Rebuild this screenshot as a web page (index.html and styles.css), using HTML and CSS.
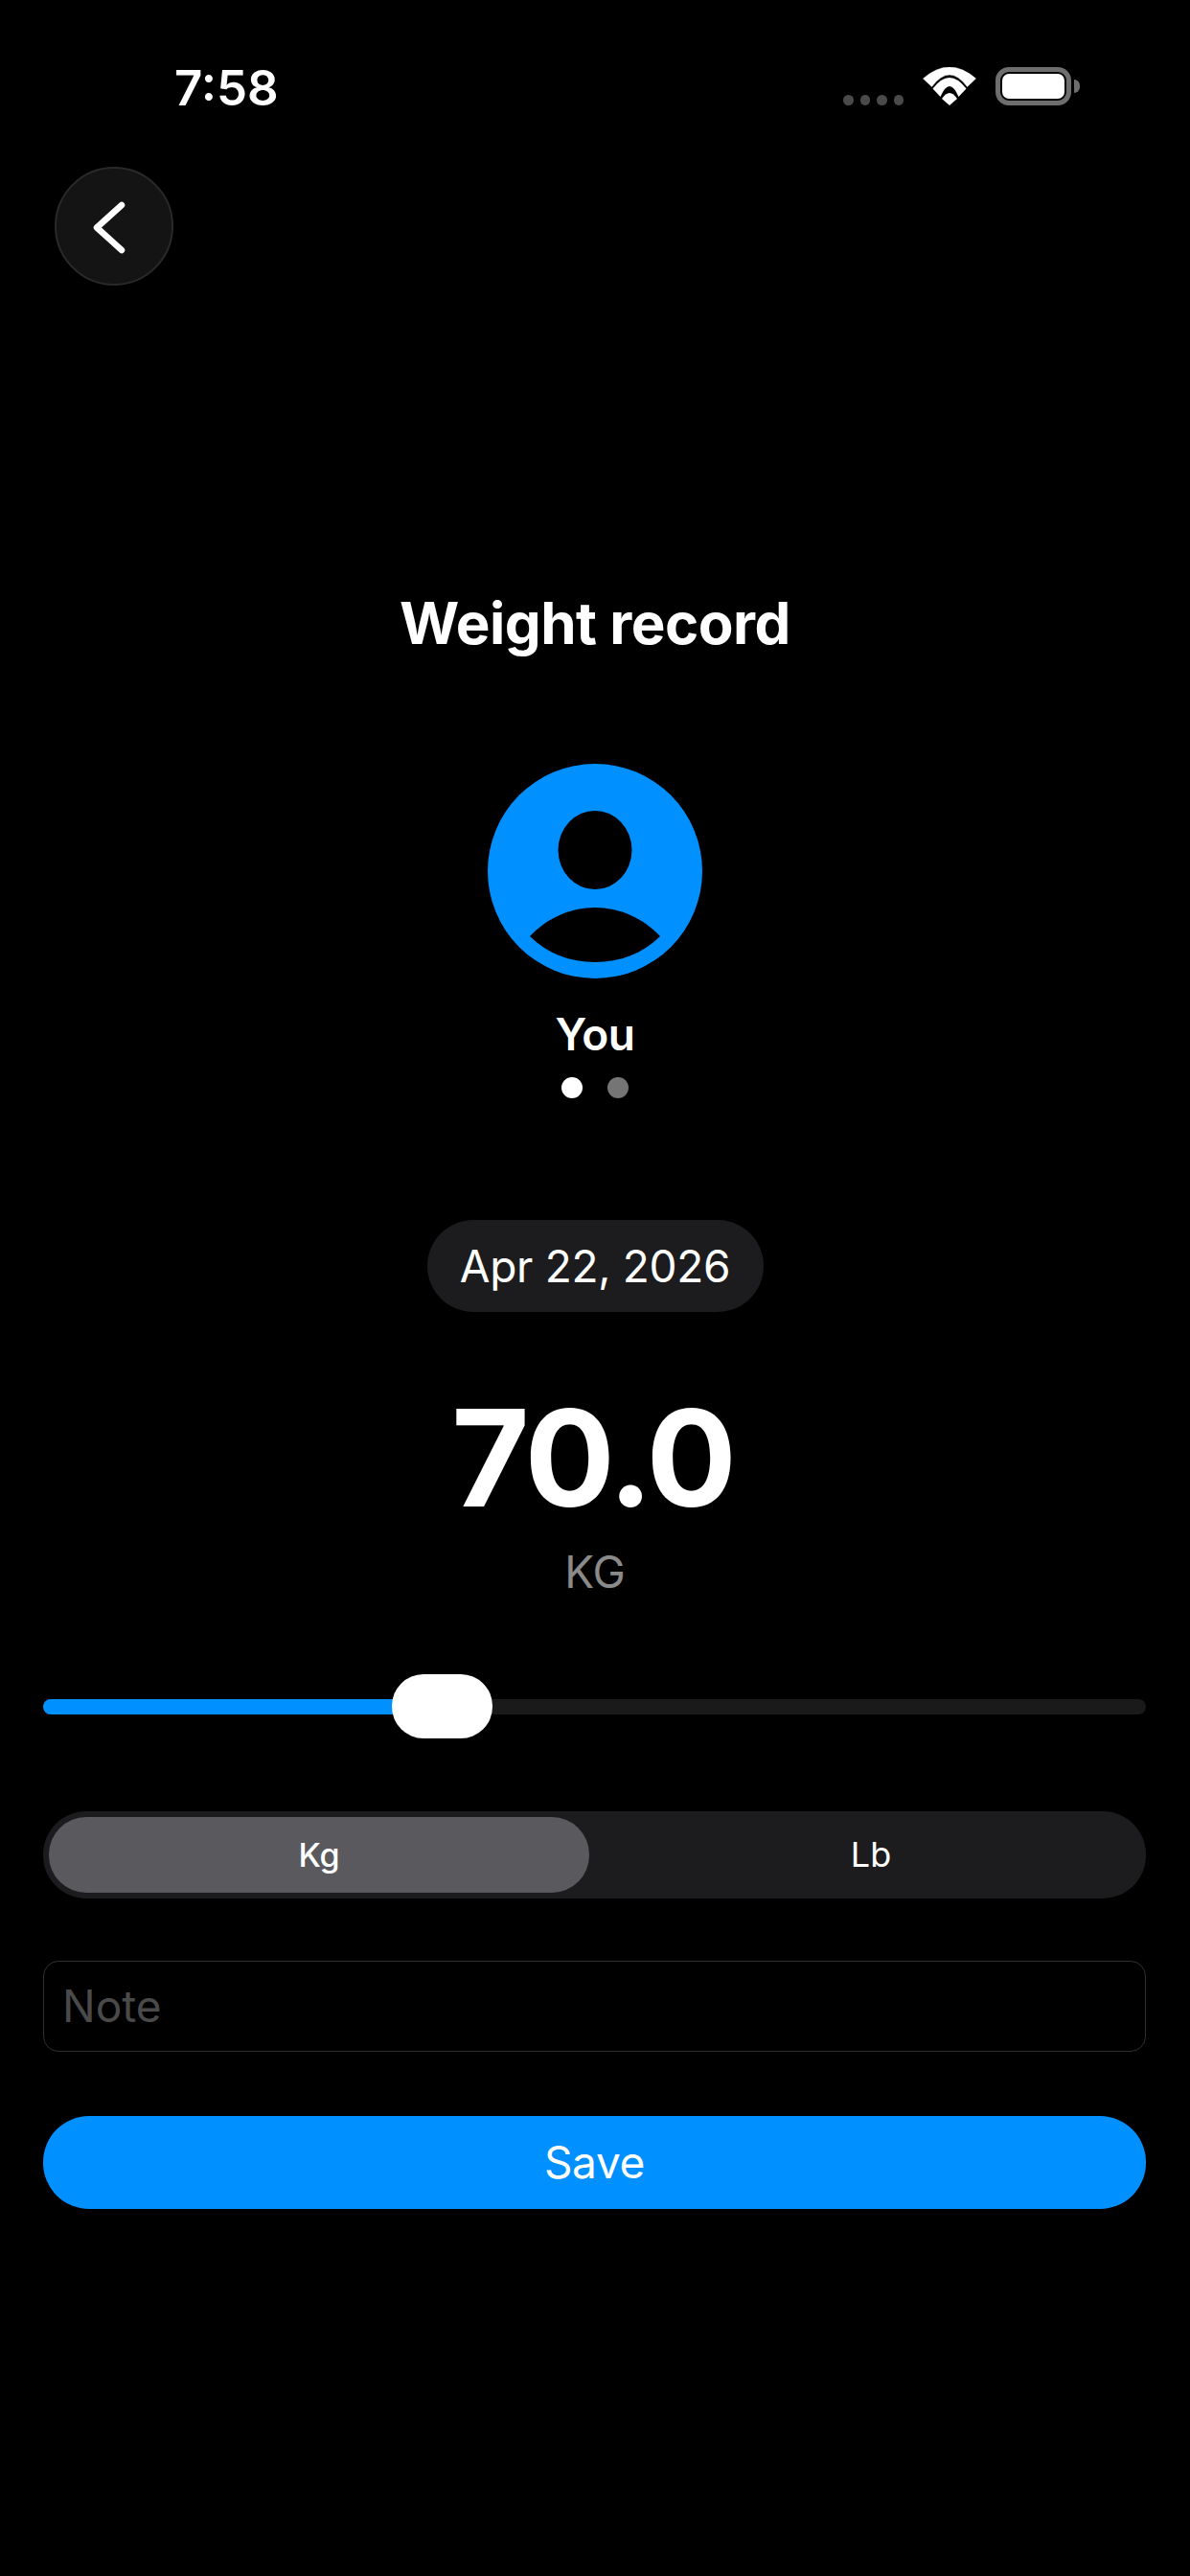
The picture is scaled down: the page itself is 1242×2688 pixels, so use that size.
FILE: index.html
```html
<!DOCTYPE html>
<html>
<head>
  <title>Weight record</title>
  <link rel="stylesheet" href="styles.css">
</head>
<body>
  <div class="screen">
    <div class="status-bar">
      <span class="time">7:58</span>
      <div class="status-icons">
        <div class="signal"><i></i><i></i><i></i><i></i></div>
        <svg class="wifi" width="56" height="40" viewBox="0 0 56 40">
          <path d="M0 12Q27.500 -12 55 12L46 20.500Q27.500 -4.500 9 20.500Z" transform="translate(.5 0)" fill="#fff" stroke="#fff" stroke-width=".5"/>
          <path d="M10 22.500Q27.500 -.5 45 22.500L37 31Q27.500 9 18 31Z" transform="translate(.5 0)" fill="#fff"/>
          <path d="M19.500 33Q27.500 21 35.500 33L27.500 40Z" transform="translate(.5 0)" fill="#fff"/>
        </svg>
        <div class="battery"><div class="battery-level"></div></div>
        <div class="battery-cap"></div>
      </div>
    </div>

    <div class="top-bar">
      <div class="back-btn">
        <svg width="44" height="60" viewBox="0 0 44 60">
          <path d="M30 8L4 31.500L30 55" fill="none" stroke="#fff" stroke-width="6.500" stroke-linecap="round" stroke-linejoin="round"/>
        </svg>
      </div>
    </div>

    <h1 class="title">Weight record</h1>

    <div class="profile">
      <svg class="avatar" width="224" height="224" viewBox="0 0 224 224">
        <circle cx="112" cy="112" r="112" fill="#0090ff"/>
        <ellipse cx="112" cy="90" rx="38.500" ry="41" fill="#000"/>
        <path d="M44 180C62 161 86 150 112 150S162 161 180 180C162 198 138 207 112 207S62 198 44 180Z" fill="#000"/>
      </svg>
      <div class="profile-name">You</div>
      <div class="dots">
        <span class="dot active"></span>
        <span class="dot"></span>
      </div>
    </div>

    <div class="date-pill">Apr 22, 2026</div>
    <div class="weight-value">70.0</div>
    <div class="weight-unit">KG</div>

    <div class="controls">
      <div class="slider">
        <div class="slider-track">
          <div class="slider-fill" style="width: 36%"></div>
        </div>
        <div class="slider-thumb"></div>
      </div>

      <div class="segments">
        <div class="segment active">Kg</div>
        <div class="segment">Lb</div>
      </div>

      <div class="note">Note</div>

      <div class="save-btn">Save</div>
    </div>
  </div>
</body>
</html>
```

FILE: styles.css
```css
* {
  box-sizing: border-box;
}
html, body {
  margin: 0;
  background: #000;
}
.screen {
  width: 1242px;
  height: 2688px;
  overflow: hidden;
  background: #000;
  color: #fff;
  font-family: Inter, "Noto Sans", sans-serif;
}

/* status bar */
.status-bar {
  height: 174px;
  padding: 62px 115px 0 182px;
  display: flex;
  justify-content: space-between;
  align-items: flex-start;
}
.time {
  font-size: 51px;
  font-weight: 600;
  line-height: 60px;
}
.status-icons {
  display: flex;
  align-items: flex-start;
  padding-top: 8px;
}
.signal {
  display: flex;
  gap: 7px;
  margin: 29px 20px 0 0;
}
.signal i {
  width: 10.500px;
  height: 10.500px;
  border-radius: 50%;
  background: #4a4a4a;
}
.wifi {
  margin-right: 20px;
}
.battery {
  width: 79px;
  height: 40px;
  padding: 2px;
  border: 5px solid #6e6e6e;
  border-radius: 14px;
}
.battery-level {
  height: 100%;
  background: #fff;
  border-radius: 7px;
}
.battery-cap {
  width: 6px;
  height: 14px;
  margin: 13px 0 0 3px;
  background: #6e6e6e;
  border-radius: 0 7px 7px 0;
}

.top-bar {
  padding-left: 57px;
}
.back-btn {
  width: 124px;
  height: 124px;
  border-radius: 50%;
  background: #141414;
  border: 2px solid #2a2a2a;
  display: flex;
  align-items: center;
  justify-content: center;
}

.title {
  margin: 312px 0 0;
  font-size: 60px;
  font-weight: 700;
  letter-spacing: -.5px;
  line-height: 80px;
  text-align: center;
}

.profile {
  margin-top: 107px;
  display: flex;
  flex-direction: column;
  align-items: center;
}
.avatar {
  display: block;
}
.profile-name {
  margin-top: 28px;
  font-size: 46px;
  font-weight: 600;
  letter-spacing: -.5px;
  line-height: 60px;
}
.dots {
  display: flex;
  gap: 26px;
  margin-top: 15px;
}
.dot {
  width: 22px;
  height: 22px;
  border-radius: 50%;
  background: #757575;
}
.dot.active {
  background: #fff;
}

.date-pill {
  width: 351px;
  height: 96px;
  margin: 127px auto 0;
  border-radius: 48px;
  background: #1c1c1e;
  font-size: 46px;
  letter-spacing: -.3px;
  line-height: 96px;
  text-align: center;
}
.weight-value {
  margin-top: 82px;
  padding-right: 5px;
  font-size: 140px;
  font-weight: 700;
  letter-spacing: -3px;
  line-height: 140px;
  text-align: center;
}
.weight-unit {
  margin-top: 19px;
  font-size: 46px;
  line-height: 60px;
  color: #8a8a8a;
  text-align: center;
}

.controls {
  margin-top: 77px;
  padding: 0 46px 0 45px;
}
.slider {
  position: relative;
  height: 67px;
  display: flex;
  align-items: center;
}
.slider-track {
  width: 100%;
  height: 16px;
  border-radius: 8px;
  background: #1a1a1a;
  overflow: hidden;
}
.slider-fill {
  height: 100%;
  background: #0090ff;
}
.slider-thumb {
  position: absolute;
  left: 364px;
  top: 0;
  width: 105px;
  height: 67px;
  border-radius: 33px;
  background: #fff;
}

.segments {
  margin-top: 76px;
  height: 91px;
  padding: 6px;
  display: flex;
  border-radius: 45px;
  background: #1c1c1e;
}
.segment {
  flex: 1;
  padding-left: 13px;
  border-radius: 39px;
  font-size: 36px;
  line-height: 79px;
  text-align: center;
}
.segment.active {
  flex: 0 0 564px;
  padding-left: 0;
  background: #5a5a5e;
  font-size: 34px;
  font-weight: 500;
}

.note {
  margin-top: 65px;
  height: 95px;
  padding-left: 19px;
  border: 1.500px solid #303030;
  border-radius: 16px;
  font-size: 46px;
  line-height: 93px;
  color: #4a4a4a;
}

.save-btn {
  margin-top: 67px;
  height: 97px;
  border-radius: 48px;
  background: #0090ff;
  font-size: 46px;
  letter-spacing: -.3px;
  line-height: 97px;
  text-align: center;
}
```
